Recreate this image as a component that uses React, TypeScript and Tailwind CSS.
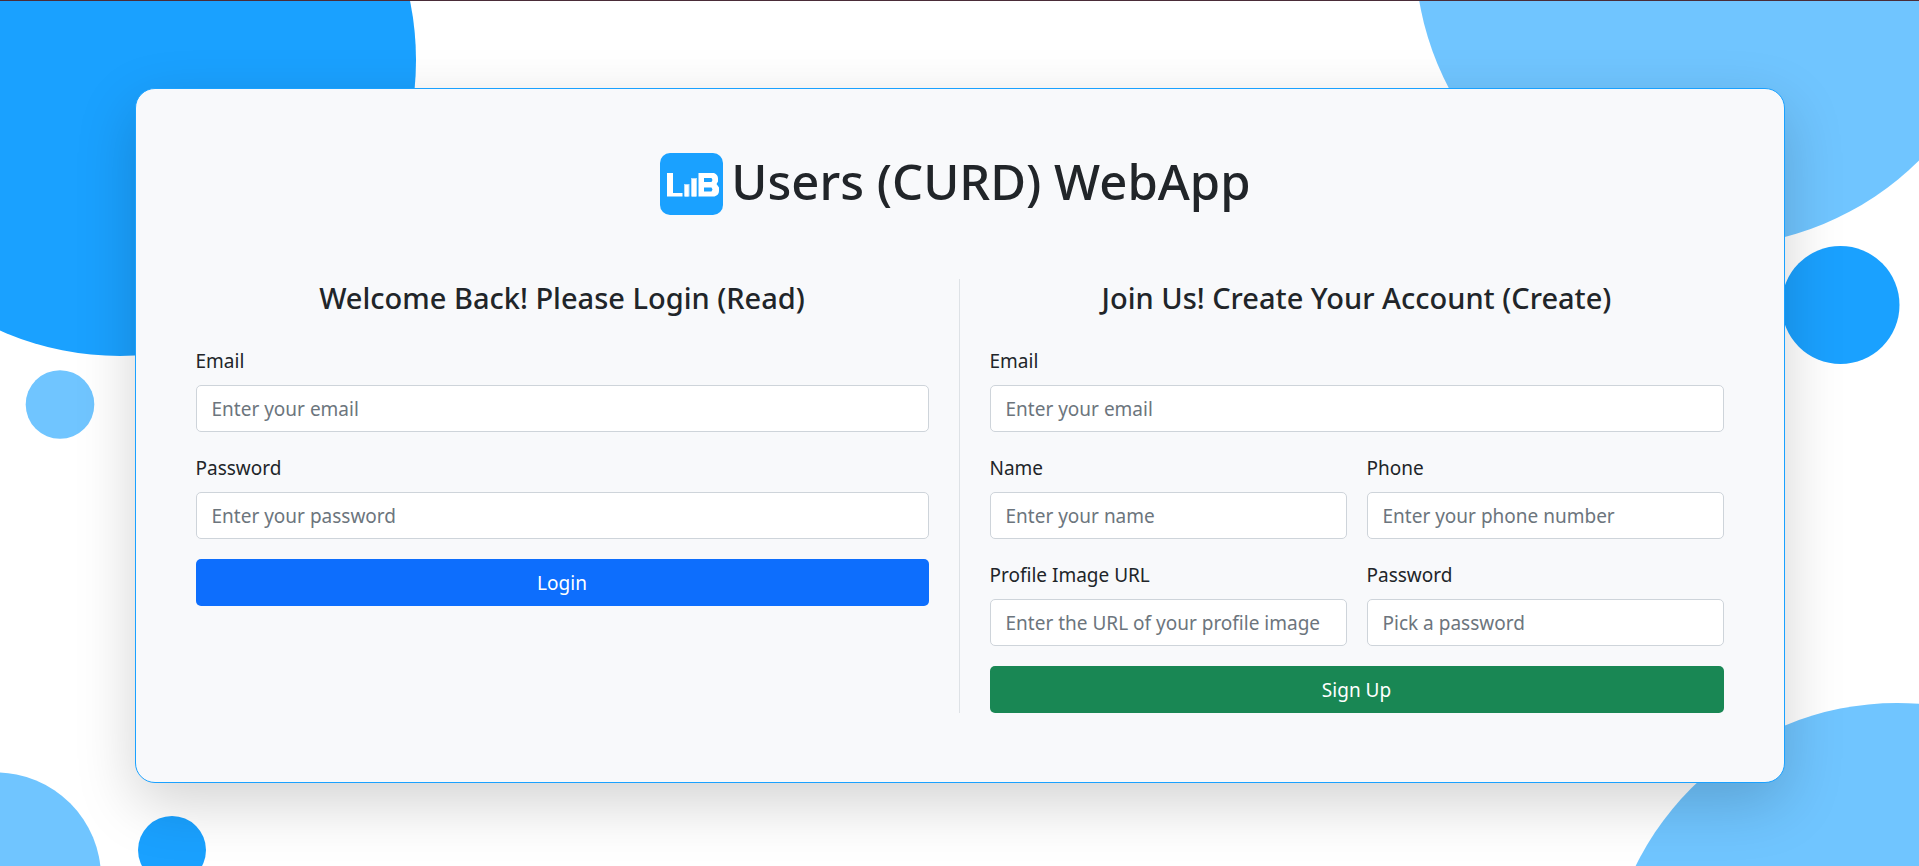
import type { InputHTMLAttributes } from "react";

function Backdrop() {
  return (
    <svg
      aria-hidden="true"
      className="absolute inset-0 h-full w-full"
      viewBox="0 0 1919 866"
      preserveAspectRatio="xMidYMid slice"
    >
      <g fill="#1aa1ff">
        <circle cx="120" cy="59.500" r="296" />
        <circle cx="1840.500" cy="304.500" r="59" />
        <circle cx="172" cy="849.500" r="34" />
      </g>
      <g fill="#70c5ff">
        <circle cx="60" cy="404" r="34.300" />
        <circle cx="1710.500" cy="-49.500" r="295.500" />
        <circle cx="-4" cy="877" r="105" />
        <circle cx="1897" cy="993.500" r="291" />
      </g>
    </svg>
  );
}

function Logo() {
  return (
    <svg aria-hidden="true" className="h-[62px] w-[63px]" viewBox="0 0 63 62">
      <rect width="63" height="62" rx="10" fill="#1aa1ff" />
      <path d="M7 20h6v20h9.500V43.500H7z" fill="#fff" />
      <path d="M24 31h5.500v12.500H24zM31 25h6v18.500h-6z" fill="#b5dfff" />
      <path d="M25 32h3.500v11.500H25zM32 26h4v17.500h-4z" fill="#fff" />
      <path
        fillRule="evenodd"
        fill="#fff"
        d="M38.500 20H54q4 1.500 4 5.500v3L56.500 31 59 34.500V38q0 4-4.500 5.500h-16zM44 25v4h7.500l1-2-1-2zM44 34.500v4h7.500l1-2-1-2z"
      />
    </svg>
  );
}

type FieldProps = InputHTMLAttributes<HTMLInputElement> & { id: string; label: string };

function Field({ id, label, ...rest }: FieldProps) {
  return (
    <div className="min-w-0">
      <label htmlFor={id} className="mb-2 block text-[19px] leading-[32px]">
        {label}
      </label>
      <input
        id={id}
        {...rest}
        className="block h-[47px] w-full rounded-[5px] border border-[#ced4da] bg-white px-[15px] text-[19px] text-[#212529] placeholder:text-[#6c757d] focus:outline-2 focus:outline-[#86b7fe]"
      />
    </div>
  );
}

export default function App() {
  return (
    <div className="relative min-h-screen overflow-hidden border-t border-[#4a2c38] bg-white font-['Noto_Sans',sans-serif] text-[#212529]">
      <Backdrop />
      <main className="relative mx-auto mt-[87px] mb-20 w-[86%] max-w-[1650px] rounded-[20px] border border-[#1aa1ff] bg-[#f8f9fb] px-[60px] pt-16 pb-[69px] shadow-[0_20px_60px_rgba(0,0,0,0.175)]">
        <h1 className="mb-16 flex items-start justify-center gap-2 pr-2 text-[49px] leading-[56px] font-medium">
          <Logo />
          Users (CURD) WebApp
        </h1>
        <div className="grid grid-cols-2">
          <section className="border-r border-[#dee2e6] pr-[30px]">
            <h2 className="mb-7 text-center text-[29px] leading-[38px] font-medium">
              Welcome Back! Please Login (Read)
            </h2>
            <form className="grid gap-5">
              <Field id="login-email" label="Email" type="email" placeholder="Enter your email" />
              <Field
                id="login-password"
                label="Password"
                type="password"
                placeholder="Enter your password"
              />
              <button
                type="button"
                className="h-[47px] rounded-[5px] bg-[#0d6efd] pt-px text-[19px] text-white"
              >
                Login
              </button>
            </form>
          </section>
          <section className="pl-[30px]">
            <h2 className="mb-7 text-center text-[29px] leading-[38px] font-medium">
              Join Us! Create Your Account (Create)
            </h2>
            <form className="grid gap-5">
              <Field id="signup-email" label="Email" type="email" placeholder="Enter your email" />
              <div className="grid grid-cols-2 gap-5">
                <Field id="signup-name" label="Name" type="text" placeholder="Enter your name" />
                <Field
                  id="signup-phone"
                  label="Phone"
                  type="tel"
                  placeholder="Enter your phone number"
                />
                <Field
                  id="signup-image"
                  label="Profile Image URL"
                  type="url"
                  placeholder="Enter the URL of your profile image"
                />
                <Field
                  id="signup-password"
                  label="Password"
                  type="password"
                  placeholder="Pick a password"
                />
              </div>
              <button
                type="button"
                className="h-[47px] rounded-[5px] bg-[#198754] pt-px text-[19px] text-white"
              >
                Sign Up
              </button>
            </form>
          </section>
        </div>
      </main>
    </div>
  );
}
